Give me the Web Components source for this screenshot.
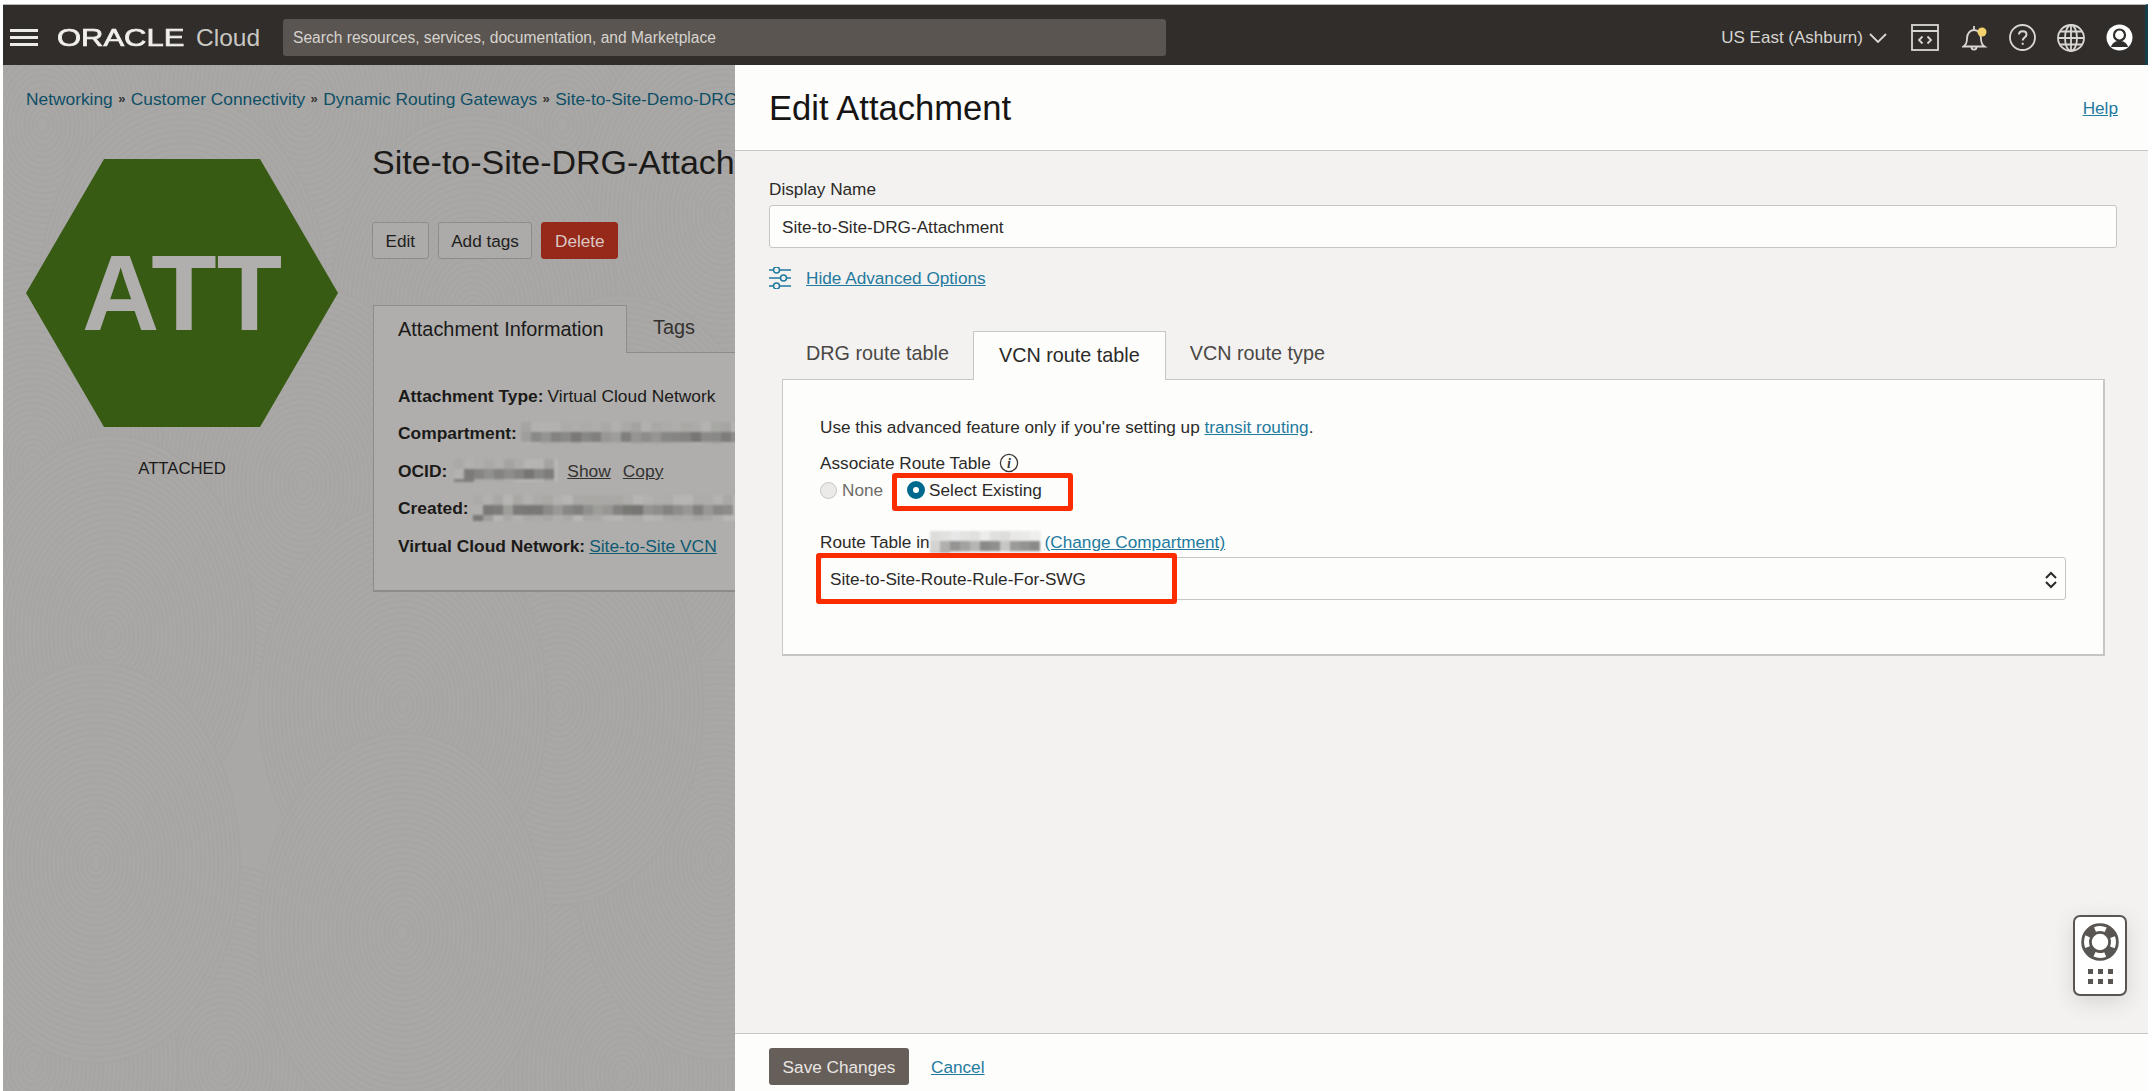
<!DOCTYPE html>
<html lang="en">
<head>
<meta charset="utf-8">
<title>Edit Attachment</title>
<style>
  html, body { margin: 0; height: 100%; background: #fff; }
  body { font: 17.2px/20px "Liberation Sans", Arial, sans-serif; color: #161513; overflow: hidden; }
</style>
</head>
<body>
<oci-console></oci-console>

<template id="console-tpl">
  <style>
    :host { display: flex; flex-direction: column; height: 1091px; box-sizing: border-box; padding: 4px 6px 0 3px; }
    .stage { position: relative; flex: 1; display: flex; overflow: hidden; }
  </style>
  <oci-topbar></oci-topbar>
  <div class="stage">
    <oci-detail-page></oci-detail-page>
    <oci-edit-panel></oci-edit-panel>
  </div>
</template>

<template id="topbar-tpl">
  <style>
    :host { display: flex; align-items: center; height: 61px; box-sizing: border-box; padding-top: 5px; background: #312d2a; border-top: 1px solid #b9b8b6; border-right: 3px solid #123f48; color: #d8d6d3; }
    .burger { width: 28px; height: 17px; margin-left: 7px; border-top: 3px solid #eeece9; border-bottom: 3px solid #eeece9; box-sizing: border-box; position: relative; }
    .burger::after { content: ""; position: absolute; left: 0; right: 0; top: 4px; height: 3px; background: #eeece9; }
    .logo { width: 131px; margin-left: 19px; font: 400 24px/24px "Liberation Sans", sans-serif; -webkit-text-stroke: .7px #f1efec; color: #f1efec; transform: scaleX(1.29); transform-origin: left center; white-space: nowrap; }
    .cloud { margin-left: 8px; width: 87px; font: 400 24.5px/28px "Liberation Sans", sans-serif; color: #c9c7c4; }
    .search { width: 883px; height: 37px; box-sizing: border-box; padding-left: 10px; display: flex; align-items: center; background: #5a5550; border-radius: 3px; font-size: 15.6px; color: #d6d3cf; }
    .region { margin-left: auto; font-size: 17px; color: #d6d4d1; display: flex; align-items: center; gap: 6px; }
    .icons { display: flex; align-items: center; margin: 0 12px 0 24px; }
    svg { display: block; fill: none; stroke: #d9d7d4; stroke-width: 1.8; }
  </style>
  <div class="burger"></div>
  <div class="logo">ORACLE</div>
  <div class="cloud">Cloud</div>
  <div class="search">Search resources, services, documentation, and Marketplace</div>
  <div class="region">US East (Ashburn)
    <svg width="18" height="10" viewBox="0 0 18 10"><path d="M1 1l8 8 8-8"/></svg>
  </div>
  <div class="icons">
    <svg width="28" height="27" viewBox="0 0 28 27"><rect x="1" y="1" width="26" height="25"/><path d="M1 7h26M11.5 12.5L8 16l3.500 3.500M16.500 12.500L20 16l-3.500 3.500"/></svg>
    <svg style="margin-left:23px" width="26" height="28" viewBox="0 0 26 28"><path d="M1.500 22.500c2.500-1.500 3.500-4 3.500-8 0-5 3-8.500 7-8.500s7 3.500 7 8.500c0 4 1 6.500 3.500 8zM12 2v3.500M9.500 23c0 3.500 5 3.500 5 0"/><circle cx="20" cy="8" r="4.500" fill="#f3d16c" stroke="none"/></svg>
    <svg style="margin-left:21px" width="27" height="27" viewBox="0 0 27 27"><circle cx="13.500" cy="13.500" r="12.500"/><path d="M10 10.500c0-4.500 7.500-4.500 7.500 0 0 3-3.800 3-3.800 6M13.700 18.800v2" stroke-width="2"/></svg>
    <svg style="margin-left:21px" width="28" height="28" viewBox="0 0 28 28"><circle cx="14" cy="14" r="13"/><ellipse cx="14" cy="14" rx="6" ry="13"/><path d="M14 1v26M1 14h26M3 7.500h22M3 20.500h22"/></svg>
    <svg style="margin-left:21px" width="27" height="27" viewBox="0 0 27 27"><circle cx="13.500" cy="13.500" r="13" fill="#fff" stroke="none"/><circle cx="13.500" cy="11" r="5.500" fill="none" stroke="#312d2a" stroke-width="2.200"/><path d="M5 23c1.500-5 5-6 8.500-6s7 1 8.500 6" fill="#312d2a" stroke="none"/></svg>
  </div>
</template>

<template id="page-tpl">
  <style>
    :host { position: relative; display: block; flex: 1; min-width: 0; box-sizing: border-box; padding: 24px 0 0 23px; color: #1b1a19; background: #a9a8a6; overflow: hidden; }
    #swirl { position: absolute; left: 0; top: 0; }
    .content { position: relative; }
    .crumbs { display: flex; align-items: center; height: 20px; white-space: nowrap; color: #0f4f66; font-size: 17.35px; }
    .crumbs i { font: bold 13px/20px "Liberation Sans", sans-serif; color: #333; width: 18px; text-align: center; }
    .row { display: flex; margin-top: 33px; }
    .badge { width: 312px; flex: none; padding-top: 17px; }
    .hex { height: 268px; display: flex; align-items: center; justify-content: center; background: #385b14; clip-path: polygon(25% 0, 75% 0, 100% 50%, 75% 100%, 25% 100%, 0 50%); font: bold 107px/1 "Liberation Sans", sans-serif; color: #b0afad; }
    .state { margin-top: 32px; text-align: center; font-size: 16.7px; color: #1b1a19; }
    .detail { margin-left: 35px; width: 700px; flex: none; }
    h1 { margin: 0 0 0 -1px; font: 400 34px/40px "Liberation Sans", sans-serif; white-space: nowrap; }
    .actions { display: flex; gap: 9px; margin: 40px 0 0 -1px; }
    .card { margin-top: 46px; }
    .strip { display: flex; height: 48px; box-sizing: border-box; }
    .on { width: 254px; box-sizing: border-box; border: 1px solid #8d8c8a; border-bottom: 0; padding-left: 24px; line-height: 47px; font-size: 19.9px; background: #afaeac; white-space: nowrap; }
    .off { flex: 1; border-bottom: 1px solid #8d8c8a; padding-left: 26px; line-height: 45px; font-size: 19.9px; color: #33322f; }
    .info { height: 239px; box-sizing: border-box; border: 1px solid #8d8c8a; border-top: 0; border-bottom-width: 2px; background: #afaeac; padding: 24px 0 0 24px; font-size: 17.4px; }
    .info div { display: flex; align-items: center; height: 37.500px; white-space: nowrap; }
    b { margin-right: 4px; }
    a { color: #0f5a73; text-decoration: underline; }
    a.plain { color: #333230; }
  </style>
  <svg id="swirl" width="740" height="1030"></svg>
  <div class="content">
    <div class="crumbs"><span>Networking</span><i>»</i><span>Customer Connectivity</span><i>»</i><span>Dynamic Routing Gateways</span><i>»</i><span>Site-to-Site-Demo-DRG</span></div>
    <div class="row">
      <div class="badge">
        <div class="hex">ATT</div>
        <div class="state">ATTACHED</div>
      </div>
      <div class="detail">
        <h1>Site-to-Site-DRG-Attachment</h1>
        <div class="actions">
          <oci-button>Edit</oci-button>
          <oci-button>Add tags</oci-button>
          <oci-button kind="danger">Delete</oci-button>
        </div>
        <div class="card">
          <div class="strip"><div class="on">Attachment Information</div><div class="off">Tags</div></div>
          <div class="info">
            <div><b>Attachment Type:</b> Virtual Cloud Network</div>
            <div><b>Compartment:</b><oci-redact w="220" h="22" tone="dim"></oci-redact></div>
            <div><b>OCID:</b><oci-redact style="margin-left:3px" w="104" h="23" tone="dim"></oci-redact><a class="plain" style="margin-left:9px">Show</a><a class="plain" style="margin-left:12px">Copy</a></div>
            <div><b>Created:</b><oci-redact w="264" h="26" tone="dim"></oci-redact></div>
            <div><b>Virtual Cloud Network:</b><a>Site-to-Site VCN</a></div>
          </div>
        </div>
      </div>
    </div>
  </div>
</template>

<template id="panel-tpl">
  <style>
    :host { position: absolute; top: 0; right: 0; bottom: 0; width: 1413px; display: flex; flex-direction: column; background: #f3f2f1; color: #2c2a28; }
    header { height: 86px; box-sizing: border-box; flex: none; background: #fdfdfc; border-bottom: 1px solid #c9c7c5; display: flex; align-items: center; justify-content: space-between; padding: 0 30px 0 34px; }
    h2 { margin: 0; font: 400 34.6px/40px "Liberation Sans", sans-serif; color: #161513; }
    a { color: #1f7a9e; text-decoration: underline; }
    main { flex: 1; padding: 28px 31px 0 34px; }
    .input { height: 43px; margin-top: 6px; box-sizing: border-box; padding-left: 12px; display: flex; align-items: center; background: #fdfdfc; border: 1px solid #c8c6c4; border-radius: 3px; color: #2c2a28; }
    .adv { display: flex; align-items: center; gap: 15px; margin-top: 19px; height: 22px; }
    .adv svg { fill: none; stroke: #1f7a9e; stroke-width: 1.500; display: block; }
    oci-tabset { margin: 42px 0 0 13px; }
    footer { height: 58px; flex: none; box-sizing: border-box; background: #fdfdfc; border-top: 1px solid #c9c7c5; display: flex; align-items: center; gap: 22px; padding: 0 0 0 34px; }
    .save { width: 140px; height: 37px; margin-top: 8px; box-sizing: border-box; display: flex; align-items: center; justify-content: center; background: #665e59; border-radius: 3px; color: #e9e6e3; }
    footer a { margin-top: 8px; }
  </style>
  <header><h2>Edit Attachment</h2><a>Help</a></header>
  <main>
    <div>Display Name</div>
    <div class="input">Site-to-Site-DRG-Attachment</div>
    <div class="adv">
      <svg width="22" height="22" viewBox="0 0 22 22"><path d="M0 3h4M11 3h11M0 11h11M18 11h4M0 19h4M11 19h11"/><circle cx="7.500" cy="3" r="3"/><circle cx="14.500" cy="11" r="3"/><circle cx="7.500" cy="19" r="3"/></svg>
      <a>Hide Advanced Options</a>
    </div>
    <oci-tabset>
      <div>Use this advanced feature only if you're setting up <a>transit routing</a>.</div>
      <oci-route-form></oci-route-form>
    </oci-tabset>
  </main>
  <footer><div class="save">Save Changes</div><a>Cancel</a></footer>
  <oci-help-widget></oci-help-widget>
</template>

<template id="tabset-tpl">
  <style>
    :host { display: block; }
    .strip { display: flex; height: 48px; font-size: 19.8px; color: #4a4845; }
    .strip div { padding: 0 24px; line-height: 44px; white-space: nowrap; }
    .strip .on { position: relative; z-index: 1; height: 49px; box-sizing: border-box; padding: 0 25px; line-height: 47px; background: #fdfdfc; border: 1px solid #c8c6c4; border-bottom: 0; color: #2c2a28; }
    .box { width: 1323px; height: 277px; box-sizing: border-box; border: 1px solid #c8c6c4; border-bottom-width: 2px; border-right-width: 2px; background: #fdfdfc; padding: 37px 37px 0 37px; }
  </style>
  <div class="strip"><div>DRG route table</div><div class="on">VCN route table</div><div>VCN route type</div></div>
  <div class="box"><slot></slot></div>
</template>

<template id="route-tpl">
  <style>
    :host { display: block; }
    a { color: #1f7a9e; text-decoration: underline; }
    .label { display: flex; align-items: center; margin-top: 16px; }
    .label svg { margin-left: 8px; display: block; }
    .radios { display: flex; align-items: center; margin-top: 7px; }
    .radio { width: 17px; height: 17px; box-sizing: border-box; border-radius: 50%; background: #ebeae8; border: 1px solid #c8c6c4; margin-right: 5px; }
    .radio.sel { width: 18px; height: 18px; margin-right: 4px; background: #fff; border: 6px solid #00688c; }
    .none { color: #6f6c69; margin-right: 24px; display: flex; align-items: center; }
    .route { display: flex; align-items: center; margin-top: 31px; }
    .select { position: relative; height: 43px; margin-top: 4px; box-sizing: border-box; padding-left: 9px; display: flex; align-items: center; background: #fdfdfc; border: 1px solid #c8c6c4; border-radius: 3px; }
    .select svg { position: absolute; right: 7px; top: 13px; fill: none; stroke: #2c2a28; stroke-width: 2; }
    oci-mark { --t: -16px; --r: auto; --b: -15px; --l: -14px; --w: 361px; }
  </style>
  <div class="label">Associate Route Table
    <svg width="20" height="20" viewBox="0 0 20 20"><circle cx="10" cy="10" r="8.600" fill="none" stroke="#3a3836" stroke-width="1.300"/><text x="10" y="15" text-anchor="middle" font-family="Liberation Serif, serif" font-style="italic" font-weight="bold" font-size="14" fill="#3a3836">i</text></svg>
  </div>
  <div class="radios">
    <span class="none"><span class="radio"></span>None</span>
    <oci-mark style="--t:-7px;--r:-31px;--b:-11px;--l:-15px;--w:auto"><span class="radio sel"></span>Select Existing</oci-mark>
  </div>
  <div class="route">Route Table in<oci-redact w="111" h="22" tone="light"></oci-redact><a style="margin-left:4px">(Change Compartment)</a></div>
  <div class="select"><oci-mark>Site-to-Site-Route-Rule-For-SWG</oci-mark>
    <svg width="14" height="18" viewBox="0 0 14 18"><path d="M2 7l5-5 5 5M2 11l5 5 5-5"/></svg>
  </div>
</template>

<script>
// Small helper: every element gets its shadow root cloned from a template.
function fromTemplate(id, init) {
  return class extends HTMLElement {
    constructor() {
      super();
      this.attachShadow({ mode: 'open' }).appendChild(document.getElementById(id).content.cloneNode(true));
      if (init) init(this.shadowRoot);
    }
  };
}

// Fingerprint swirls behind the dimmed page. Later ones paint over earlier ones.
function drawSwirls(root) {
  const spots = [[40, 60], [300, 40], [560, 60], [720, 150], [180, 230], [470, 250], [30, 400], [300, 420], [620, 430],
    [220, 1000], [620, 1010], [30, 1000], [108, 570], [715, 795], [556, 640], [93, 798], [400, 640], [400, 868]];
  let out = '';
  for (const [cx, cy] of spots) {
    for (let ry = 200; ry > 3; ry -= 6) {
      out += `<ellipse cx="${cx}" cy="${cy}" rx="${(ry * 0.72).toFixed(1)}" ry="${ry}" fill="#a9a8a6" stroke="#a6a5a3" stroke-width="2"/>`;
    }
  }
  root.getElementById('swirl').innerHTML = out;
}

customElements.define('oci-console', fromTemplate('console-tpl'));
customElements.define('oci-topbar', fromTemplate('topbar-tpl'));
customElements.define('oci-detail-page', fromTemplate('page-tpl', drawSwirls));
customElements.define('oci-edit-panel', fromTemplate('panel-tpl'));
customElements.define('oci-tabset', fromTemplate('tabset-tpl'));
customElements.define('oci-route-form', fromTemplate('route-tpl'));

class OciButton extends HTMLElement {
  connectedCallback() {
    if (this.shadowRoot) return;
    const danger = this.getAttribute('kind') === 'danger';
    this.attachShadow({ mode: 'open' }).innerHTML = `
      <style>
        :host { display: inline-flex; align-items: center; height: 37px; box-sizing: border-box; padding: 0 12.5px; border-radius: 3px;
          border: 1px solid ${danger ? '#97291a' : '#8d8c8a'}; background: ${danger ? '#97291a' : '#acaba9'}; color: ${danger ? '#d9c8c4' : '#1f1e1c'}; }
      </style><slot></slot>`;
  }
}
customElements.define('oci-button', OciButton);

// Red annotation frame drawn round whatever is slotted in.
class OciMark extends HTMLElement {
  connectedCallback() {
    if (this.shadowRoot) return;
    this.attachShadow({ mode: 'open' }).innerHTML = `
      <style>
        :host { position: relative; display: inline-flex; align-items: center; }
        i { position: absolute; top: var(--t); right: var(--r); bottom: var(--b); left: var(--l); width: var(--w); box-sizing: border-box; border: 5px solid #fb2c00; border-radius: 3px; pointer-events: none; }
      </style><slot></slot><i></i>`;
  }
}
customElements.define('oci-mark', OciMark);

// Pixelated smear standing in for values hidden in the screenshot.
class OciRedact extends HTMLElement {
  connectedCallback() {
    if (this.shadowRoot) return;
    const w = +this.getAttribute('w'), h = +this.getAttribute('h');
    const dim = this.getAttribute('tone') === 'dim';
    const size = 10;
    let seed = w * 31 + h;
    let cells = '';
    for (let y = 0; y < h; y += size) {
      for (let x = 0; x < w; x += size) {
        seed = (seed * 1103515245 + 12345) & 0x7fffffff;
        const r = ((seed >> 8) % 100) / 100;
        const mid = y >= 8 && y < h - 6;
        const a = mid ? 0.25 + r * 0.5 : r * 0.22;
        cells += `<i style="opacity:${a.toFixed(2)}"></i>`;
      }
    }
    this.attachShadow({ mode: 'open' }).innerHTML = `
      <style>
        :host { display: inline-grid; grid-template-columns: repeat(auto-fill, ${size}px); width: ${w}px; height: ${h}px; overflow: hidden; filter: blur(.8px); background: ${dim ? '#b8b7b5' : '#f4f4f3'}; }
        i { display: block; height: ${size}px; background: #5d5c5a; }
      </style>${cells}`;
  }
}
customElements.define('oci-redact', OciRedact);

class OciHelpWidget extends HTMLElement {
  connectedCallback() {
    if (this.shadowRoot) return;
    this.attachShadow({ mode: 'open' }).innerHTML = `
      <style>
        :host { position: absolute; right: 21px; bottom: 95px; width: 54px; height: 81px; box-sizing: border-box; background: #fff; border: 2.500px solid #595552; border-radius: 7px; box-shadow: 0 6px 22px rgba(0,0,0,.12); display: flex; flex-direction: column; align-items: center; padding-top: 6px; }
        .dots { display: grid; grid-template-columns: repeat(3, 5px); gap: 5px; margin-top: 8px; }
        .dots i { width: 5px; height: 5px; background: #595552; }
      </style>
      <svg width="38" height="38" viewBox="0 0 38 38">
        <circle cx="19" cy="19" r="13.500" fill="none" stroke="#595552" stroke-width="9"/>
        <circle cx="19" cy="19" r="13.500" fill="none" stroke="#fff" stroke-width="5" stroke-dasharray="11 10.200" stroke-dashoffset="5.500"/>
        <circle cx="19" cy="19" r="9" fill="none" stroke="#595552" stroke-width="1.500"/>
        <circle cx="19" cy="19" r="18" fill="none" stroke="#595552" stroke-width="1.500"/>
      </svg>
      <div class="dots"><i></i><i></i><i></i><i></i><i></i><i></i></div>`;
  }
}
customElements.define('oci-help-widget', OciHelpWidget);
</script>
</body>
</html>
